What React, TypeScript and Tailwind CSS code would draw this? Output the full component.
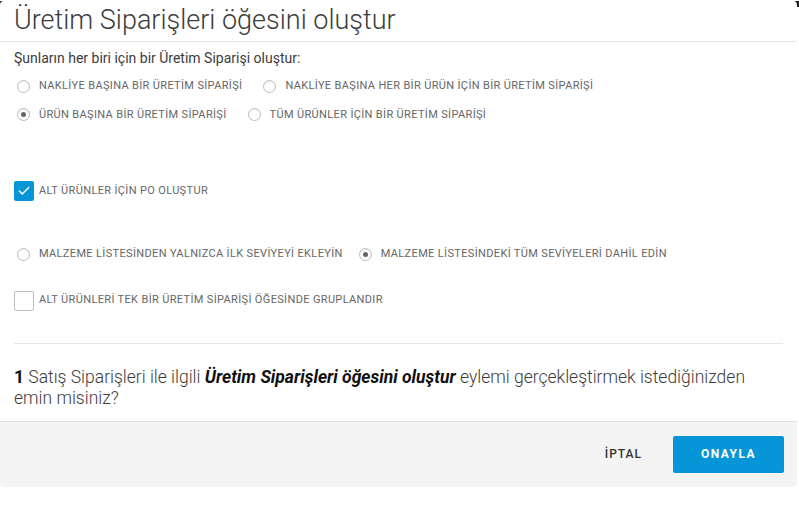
import { Check } from 'lucide-react'

interface Option {
  label: string
  checked?: boolean
}

const Radio = ({ label, checked }: Option) => (
  <label className="flex items-center gap-[9px] cursor-pointer">
    <span className="flex h-[13px] w-[13px] items-center justify-center rounded-full border border-[#bdbdbd] bg-white shadow-[inset_0_1px_1px_rgba(0,0,0,0.08)]">
      {checked && <span className="h-[5px] w-[5px] rounded-full bg-[#666]" />}
    </span>
    <span className="text-[11px] tracking-[0.35px] text-[#666]">{label}</span>
  </label>
)

const Checkbox = ({ label, checked }: Option) => (
  <label className="flex items-center gap-[5px] cursor-pointer">
    {checked ? (
      <span className="flex h-5 w-5 items-center justify-center rounded-[2px] bg-[#0696d7]">
        <Check className="h-[14px] w-[14px] text-white" strokeWidth={2.5} />
      </span>
    ) : (
      <span className="h-5 w-5 rounded-[2px] border border-[#bdbdbd] bg-white" />
    )}
    <span className="text-[11px] tracking-[0.35px] text-[#666]">{label}</span>
  </label>
)

export default function App() {
  return (
    <div className="relative h-[506px] w-[799px] bg-white font-['Roboto',sans-serif]">
      {/* karartılmış arka plan şeridi */}
      <div className="absolute inset-x-0 top-0 h-[6px] bg-[#1e1e1e]" />

      <div className="relative mt-px w-[797px] overflow-hidden rounded-[4px] bg-white">
        {/* Header */}
        <div className="h-[41px] border-b border-[#e6e6e6] px-[14px] pt-[1px]">
          <h2 className="text-[27px] font-light leading-[36px] text-[#3c3c3c]">
            Üretim Siparişleri öğesini oluştur
          </h2>
        </div>

        {/* Body */}
        <div className="px-[14px]">
          <p className="pt-[8px] text-[14px] leading-[16px] text-[#3c3c3c]">
            Şunların her biri için bir Üretim Siparişi oluştur:
          </p>

          <div className="mt-[12px] flex flex-col gap-[12px] pl-[3px]">
            <div className="flex gap-[21px]">
              <Radio label="NAKLİYE BAŞINA BİR ÜRETİM SİPARİŞİ" />
              <Radio label="NAKLİYE BAŞINA HER BİR ÜRÜN İÇİN BİR ÜRETİM SİPARİŞİ" />
            </div>
            <div className="flex gap-[21px]">
              <Radio label="ÜRÜN BAŞINA BİR ÜRETİM SİPARİŞİ" checked />
              <Radio label="TÜM ÜRÜNLER İÇİN BİR ÜRETİM SİPARİŞİ" />
            </div>
          </div>

          <div className="mt-[58px]">
            <Checkbox label="ALT ÜRÜNLER İÇİN PO OLUŞTUR" checked />
          </div>

          <div className="mt-[45px] flex gap-[16px] pl-[3px]">
            <Radio label="MALZEME LİSTESİNDEN YALNIZCA İLK SEVİYEYİ EKLEYİN" />
            <Radio label="MALZEME LİSTESİNDEKİ TÜM SEVİYELERİ DAHİL EDİN" checked />
          </div>

          <div className="mt-[28px]">
            <Checkbox label="ALT ÜRÜNLERİ TEK BİR ÜRETİM SİPARİŞİ ÖĞESİNDE GRUPLANDIR" />
          </div>

          <div className="mt-[32px] border-t border-[#e6e6e6]" />

          <div className="pt-[23px] pb-[12px] text-[17.5px] font-light leading-[21px] text-[#3c3c3c]">
            <p>
              <b className="font-bold text-[#111]">1</b>
              <span> Satış Siparişleri ile ilgili </span>
              <b className="font-bold italic text-[#111]">Üretim Siparişleri öğesini oluştur</b>
              <span> eylemi gerçekleştirmek istediğinizden</span>
            </p>
            <p>emin misiniz?</p>
          </div>
        </div>

        {/* Footer */}
        <div className="flex h-[66px] items-center justify-end gap-[31px] border-t border-[#e0e0e0] bg-[#f4f4f4] px-[13px]">
          <button className="text-[12px] font-medium tracking-[1px] text-[#333]">İPTAL</button>
          <button className="h-[37px] w-[111px] rounded-[2px] bg-[#0696d7] text-[12px] font-bold tracking-[1.5px] text-white">
            ONAYLA
          </button>
        </div>
      </div>
    </div>
  )
}
